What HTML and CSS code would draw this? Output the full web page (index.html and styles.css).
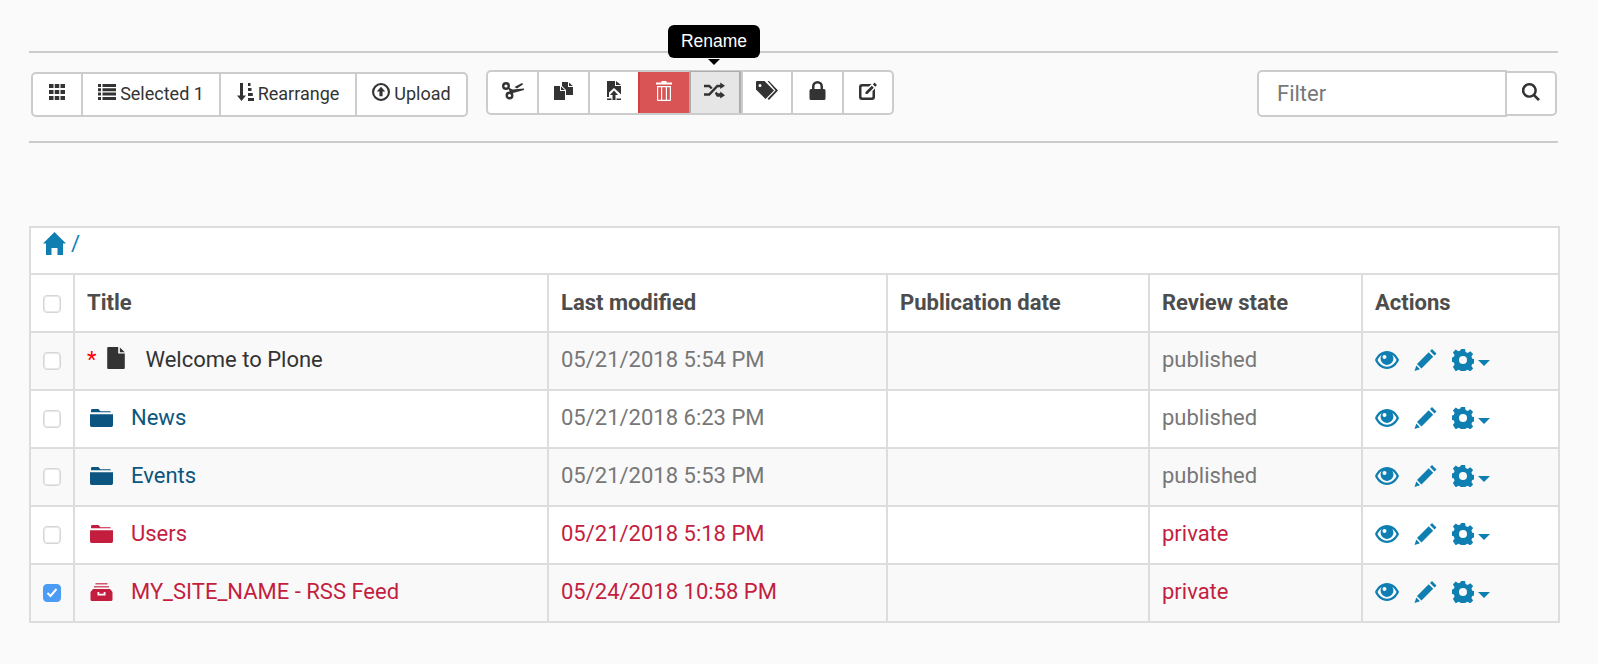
FILE: index.html
```html
<!DOCTYPE html>
<html lang="en">
<head>
    <meta charset="UTF-8">
    <meta name="viewport" content="width=device-width, initial-scale=1.0">
    <title>Folder contents</title>
    <link rel="stylesheet" href="styles.css">
</head>
<body>
    <svg class="defs" width="0" height="0">
        <symbol id="i-file" viewBox="0 0 16 20"><path d="M1 0h9v6h6v13a1 1 0 0 1-1 1H1a1 1 0 0 1-1-1V1a1 1 0 0 1 1-1zM11.500 0.500L16 4.800h-4.500z"/></symbol>
        <symbol id="i-folder" viewBox="0 0 22 17"><path d="M2 0h6l2 2h9a1 1 0 0 1 1 1H1V1a1 1 0 0 1 1-1zM0 5h22v10.500a1.500 1.500 0 0 1-1.500 1.500h-19A1.500 1.500 0 0 1 0 15.500z"/></symbol>
        <symbol id="i-box" viewBox="0 0 22 18"><path opacity=".75" d="M5 0h12v1.500H5zM3.500 3h15v1.500h-15z"/><path d="M2.500 6h17L22 9v7.500a1.500 1.500 0 0 1-1.500 1.500h-19A1.500 1.500 0 0 1 0 16.500V9zM7 9v3.500h8V9h-1.800v1.800H8.800V9z"/></symbol>
        <symbol id="i-eye" viewBox="0 0 24 18"><path fill-rule="evenodd" d="M12 0c5.500 0 9.800 3.800 12 9-2.200 5.200-6.500 9-12 9S2.200 14.200 0 9C2.200 3.800 6.500 0 12 0zM2.500 9c1.900 3.900 5.300 6.700 9.500 6.700s7.600-2.800 9.500-6.700c-1-2-2.400-3.700-4.200-4.900.7 1 1.100 2.200 1.100 3.500 0 3.500-2.900 6.300-6.400 6.300S5.600 11.100 5.600 7.600c0-1.300.4-2.500 1.100-3.500C4.900 5.300 3.500 7 2.500 9zM9.500 4a2 2 0 1 0 0 4 2 2 0 0 0 0-4z"/></symbol>
        <symbol id="i-pencil" viewBox="0 0 22 22"><path d="M17.500 0l4.500 4.500-2 2L15.500 2zM14.200 3.300l4.500 4.500L7 19.500 2.500 15zM1.800 16.500l3.700 3.700L0 22z"/></symbol>
        <symbol id="i-gear" viewBox="0 0 22 22"><path fill-rule="evenodd" d="M9 0h4l.6 3 2.100.9 2.600-1.700 2.800 2.800-1.700 2.600.9 2.100 3 .6v4l-3 .6-.9 2.100 1.700 2.600-2.800 2.800-2.600-1.700-2.100.9-.6 3H9l-.6-3-2.100-.9-2.600 1.700L.9 18l1.700-2.600-.9-2.100-3-.6v-4l3-.6.9-2.100L.9 3.400 3.700.6l2.600 1.700 2.100-.9zM11 7a4 4 0 1 0 0 8 4 4 0 0 0 0-8z"/></symbol>
    </svg>

    <div class="page">
        <div class="toolbar">
            <div class="btn-group low">
                <button class="btn wide-1"><svg class="ic" width="16" height="16" viewBox="0 0 16 16"><path d="M0 0h4.500v4H0zM5.750 0h4.500v4h-4.500zM11.500 0H16v4h-4.500zM0 6h4.500v4H0zM5.750 6h4.500v4h-4.500zM11.500 6H16v4h-4.500zM0 12h4.500v4H0zM5.750 12h4.500v4h-4.500zM11.500 12H16v4h-4.500z"/></svg></button>
                <button class="btn wide-2"><svg class="ic" width="18" height="16" viewBox="0 0 18 16"><path d="M0 0h3v3H0zM4.500 0H18v3H4.500zM0 4.300h3v3H0zM4.500 4.300H18v3H4.500zM0 8.600h3v3H0zM4.500 8.600H18v3H4.500zM0 13h3v3H0zM4.500 13H18v3H4.500z"/></svg><span>Selected 1</span></button>
                <button class="btn wide-3"><svg class="ic" width="17" height="18" viewBox="0 0 17 18"><path d="M3 0h3v12.500h3L4.500 18 0 12.500h3zM11 0h2.500v3H11zM11 5h3.500v3H11zM11 10h4.800v3H11zM11 15h6v3h-6z"/></svg><span>Rearrange</span></button>
                <button class="btn wide-4"><svg class="ic" width="18" height="18" viewBox="0 0 17 17"><path fill-rule="evenodd" d="M8.500 0a8.500 8.500 0 1 1 0 17 8.500 8.500 0 0 1 0-17zm0 2a6.500 6.500 0 1 0 0 13 6.500 6.500 0 0 0 0-13zm0 1.500l4 4.500H10v4.500H7V8H4.500z"/></svg><span>Upload</span></button>
            </div>

            <div class="btn-group icons">
                <button class="btn sq"><svg class="ic" width="22" height="18" viewBox="0 0 22 18"><circle cx="4" cy="4" r="2.800" fill="none" stroke="#333" stroke-width="2.400"/><circle cx="7.500" cy="13.500" r="2.800" fill="none" stroke="#333" stroke-width="2.400"/><path d="M6.500 5.500l4 2L22 6.500V8l-11 3-2.500 1-2-5.500zM12.500 5l7.500-4 1.200 1.200L15 6.500z"/></svg></button>
                <button class="btn sq"><svg class="ic" width="19" height="18" viewBox="0 0 19 18"><path d="M0 4h6v5h5v9H0zM7 4.500L10.800 8H7zM8 0h6v5h5v8h-7V8L8 4zM15 .5L18.800 4H15z"/></svg></button>
                <button class="btn sq"><svg class="ic" width="14" height="19" viewBox="0 0 14 19"><path d="M0 0h8v5h6v8.500L11.500 11 7 7 2 11.500V16H0zM9 0l5 4H9zM7 9.500l4 4.500H8.500v5h-3v-5H3zM0 17.500h4.500V19H0zM9.500 17.500H14V19H9.500z"/></svg></button>
                <button class="btn sq danger"><svg class="ic" width="16" height="20" viewBox="0 0 16 20"><path fill-rule="evenodd" d="M5.500 0h5v1.500h5.500v2H0v-2h5.500zM1 5h14v14a1 1 0 0 1-1 1H2a1 1 0 0 1-1-1zm1.200 1.200V18.800H5V6.200zm4 0V18.800h3.600V6.200zm4.800 0V18.800h2.800V6.200z"/></svg></button>
                <button class="btn sq active"><svg class="ic" width="21" height="17" viewBox="0 0 22 17"><path d="M17 0l5 3.500L17 7V5h-2.500L6 14H0v-2.500h5L13.500 2.500H17zM0 2.500h6l3 3-1.700 1.800L5 5H0zM13 9.700l1.500 1.800H17v-2l5 4-5 3.500v-2h-3.500L11.300 11.500z"/></svg></button>
                <button class="btn sq"><svg class="ic" width="22" height="19" viewBox="0 0 22 19"><path fill-rule="evenodd" d="M1 0h7.500L18 9.500 9.500 18 0 8.500V1a1 1 0 0 1 1-1zm3 3a1.500 1.500 0 1 0 0 3 1.500 1.500 0 0 0 0-3zM11.500 0h1.500L22 9.500 13 19l-1.500-1.200 8-8.300z"/></svg></button>
                <button class="btn sq"><svg class="ic" width="17" height="19" viewBox="0 0 16 19"><path fill-rule="evenodd" d="M8 0a5.500 5.500 0 0 1 5.500 5.500V8h1A1.500 1.500 0 0 1 16 9.500v8a1.500 1.500 0 0 1-1.500 1.500h-13A1.500 1.500 0 0 1 0 17.500v-8A1.500 1.500 0 0 1 1.500 8h1V5.500A5.500 5.500 0 0 1 8 0zm0 2.500a3 3 0 0 0-3 3V8h6V5.500a3 3 0 0 0-3-3z"/></svg></button>
                <button class="btn sq"><svg class="ic" width="18" height="18" viewBox="0 0 18 18"><path d="M3 2h9.500L10 4.500H3.500a1 1 0 0 0-1 1v9a1 1 0 0 0 1 1h9a1 1 0 0 0 1-1V9L16 6.500V15a3 3 0 0 1-3 3H3a3 3 0 0 1-3-3V5a3 3 0 0 1 3-3zM12.800 3.700L14.800 5.700 8.500 12H6.500v-2zM15.500 0.500L18 3l-1.800 1.800-2.300-2.300z"/></svg></button>
                <div class="tooltip">Rename</div>
            </div>

            <div class="filter">
                <input class="filter-input" type="text" placeholder="Filter">
                <button class="filter-btn"><svg class="ic" width="18" height="18" viewBox="0 0 17 17"><path fill-rule="evenodd" d="M7 0a7 7 0 0 1 5.700 11l4.300 4.300-1.900 1.700-4.200-4.300A7 7 0 1 1 7 0zm0 2.300a4.700 4.700 0 1 0 0 9.400 4.700 4.700 0 0 0 0-9.400z"/></svg></button>
            </div>
        </div>

        <table class="listing">
            <colgroup>
                <col class="col-check">
                <col class="col-title">
                <col class="col-mod">
                <col class="col-pub">
                <col class="col-state">
                <col class="col-act">
            </colgroup>
            <thead>
                <tr class="crumbs">
                    <th colspan="6"><a class="crumb" href="#"><svg width="23" height="23" viewBox="0 0 23 23"><path d="M11.500 0L23 11.500h-3V23h-5.500v-7h-6v7H3V11.500H0z"/></svg><span>/</span></a></th>
                </tr>
                <tr class="heads">
                    <th><span class="cb"></span></th>
                    <th>Title</th>
                    <th>Last modified</th>
                    <th>Publication date</th>
                    <th>Review state</th>
                    <th>Actions</th>
                </tr>
            </thead>
            <tbody>
                <tr>
                    <td><span class="cb"></span></td>
                    <td class="title dark"><span class="star">*</span><svg class="doc"><use href="#i-file"/></svg><span>Welcome to Plone</span></td>
                    <td>05/21/2018 5:54 PM</td>
                    <td></td>
                    <td>published</td>
                    <td class="acts"><svg class="a-eye"><use href="#i-eye"/></svg><svg class="a-pen"><use href="#i-pencil"/></svg><svg class="a-gear"><use href="#i-gear"/></svg><span class="caret"></span></td>
                </tr>
                <tr>
                    <td><span class="cb"></span></td>
                    <td class="title blue"><svg class="fold"><use href="#i-folder"/></svg>News</td>
                    <td>05/21/2018 6:23 PM</td>
                    <td></td>
                    <td>published</td>
                    <td class="acts"><svg class="a-eye"><use href="#i-eye"/></svg><svg class="a-pen"><use href="#i-pencil"/></svg><svg class="a-gear"><use href="#i-gear"/></svg><span class="caret"></span></td>
                </tr>
                <tr>
                    <td><span class="cb"></span></td>
                    <td class="title blue"><svg class="fold"><use href="#i-folder"/></svg>Events</td>
                    <td>05/21/2018 5:53 PM</td>
                    <td></td>
                    <td>published</td>
                    <td class="acts"><svg class="a-eye"><use href="#i-eye"/></svg><svg class="a-pen"><use href="#i-pencil"/></svg><svg class="a-gear"><use href="#i-gear"/></svg><span class="caret"></span></td>
                </tr>
                <tr class="private">
                    <td><span class="cb"></span></td>
                    <td class="title"><svg class="fold"><use href="#i-folder"/></svg>Users</td>
                    <td>05/21/2018 5:18 PM</td>
                    <td></td>
                    <td>private</td>
                    <td class="acts"><svg class="a-eye"><use href="#i-eye"/></svg><svg class="a-pen"><use href="#i-pencil"/></svg><svg class="a-gear"><use href="#i-gear"/></svg><span class="caret"></span></td>
                </tr>
                <tr class="private">
                    <td><span class="cb on"><svg width="12" height="10" viewBox="0 0 12 10"><path d="M1.500 5l3 3 6-7" fill="none" stroke="#fff" stroke-width="2"/></svg></span></td>
                    <td class="title"><svg class="fold"><use href="#i-box"/></svg>MY_SITE_NAME - RSS Feed</td>
                    <td>05/24/2018 10:58 PM</td>
                    <td></td>
                    <td>private</td>
                    <td class="acts"><svg class="a-eye"><use href="#i-eye"/></svg><svg class="a-pen"><use href="#i-pencil"/></svg><svg class="a-gear"><use href="#i-gear"/></svg><span class="caret"></span></td>
                </tr>
            </tbody>
        </table>
    </div>
</body>
</html>
```

FILE: styles.css
```css
html, body {
    margin: 0;
    padding: 0;
}
body {
    background-color: #fafafa;
    color: #333;
    font-family: Roboto, "Liberation Sans", sans-serif;
    font-size: 22px;
}
.defs {
    display: block;
    height: 0;
}
.page {
    width: 1529px;
    margin-left: 29px;
    padding-top: 51px;
}
.toolbar {
    display: flex;
    align-items: flex-start;
    height: 92px;
    padding-top: 17px;
    box-sizing: border-box;
    border-top: 2px solid #ccc;
    border-bottom: 2px solid #ccc;
}
.ic {
    fill: #333;
    flex: none;
}
.btn-group {
    display: flex;
    height: 45px;
    background-color: #fff;
    border: 2px solid #ccc;
    border-radius: 5px;
    box-sizing: border-box;
    position: relative;
}
.btn-group.low {
    margin: 2px 0 0 2px;
}
.btn-group.low .ic {
    margin-bottom: 4px;
}
.btn-group.low .btn {
    padding-bottom: 2px;
}
.btn-group.icons {
    margin-left: 18px;
}
.btn {
    display: flex;
    align-items: center;
    justify-content: center;
    gap: 4px;
    padding: 0;
    background: none;
    border: 0;
    border-left: 2px solid #ccc;
    color: #333;
    font-family: inherit;
    font-size: 18px;
}
.btn:first-child {
    border-left: 0;
}
.wide-1 { width: 48px; }
.wide-2 { width: 138px; }
.wide-3 { width: 136px; }
.wide-4 { width: 111px; }
.sq {
    width: 50.500px;
    padding-bottom: 4px;
}
.sq:first-child {
    width: 49px;
}
.danger {
    background-color: #d95454;
    border-left-color: #d43f3f;
}
.danger .ic {
    fill: #fff;
}
.sq.active {
    width: 52px;
    background-color: #e6e6e6;
    border-left-color: #adadad;
    border-right: 2px solid #adadad;
    border-top: 1px solid #adadad;
    margin-top: -1px;
}
.tooltip {
    position: absolute;
    left: 180px;
    top: -47px;
    width: 92px;
    height: 33px;
    background-color: #000;
    color: #fff;
    border-radius: 6px;
    font-size: 17.500px;
    line-height: 33px;
    text-align: center;
    font-family: "Liberation Sans", Arial, sans-serif;
}
.tooltip::after {
    content: "";
    position: absolute;
    left: 40px;
    top: 100%;
    margin-top: 1px;
    border: 6px solid transparent;
    border-top-color: #000;
    border-bottom: 0;
}
.filter {
    display: flex;
    align-items: center;
    margin-left: auto;
    margin-right: 1px;
}
.filter-input {
    width: 250px;
    height: 47px;
    box-sizing: border-box;
    border: 2px solid #ccc;
    border-radius: 5px 0 0 5px;
    padding: 0 18px;
    font-family: inherit;
    font-size: 22px;
    background-color: #fff;
}
.filter-input::placeholder {
    color: #777;
    opacity: 1;
}
.filter-btn {
    width: 50px;
    height: 45px;
    box-sizing: border-box;
    border: 2px solid #ccc;
    border-left: 0;
    border-radius: 0 5px 5px 0;
    background-color: #fff;
    padding: 0 0 3px;
    display: flex;
    align-items: center;
    justify-content: center;
}
.listing {
    width: 1529px;
    margin-top: 83px;
    border-collapse: collapse;
    table-layout: fixed;
    background-color: #fff;
}
.listing th, .listing td {
    border: 2px solid #ddd;
    padding: 0 12px 3px;
    text-align: left;
    color: #777;
    height: 53px;
    box-sizing: content-box;
    white-space: nowrap;
}
.listing th {
    color: #4d4d4d;
    font-weight: 700;
    font-size: 22px;
    padding-bottom: 2px;
    height: 54px;
}
.col-check { width: 44px; }
.col-title { width: 474px; }
.col-mod { width: 339px; }
.col-pub { width: 262px; }
.col-state { width: 213px; }
.col-act { width: 197px; }
.listing tbody tr:nth-child(odd) {
    background-color: #f9f9f9;
}
.listing .crumbs th {
    height: 43px;
    vertical-align: top;
    padding-top: 2px;
    padding-bottom: 0;
}
.crumb {
    display: inline-flex;
    align-items: center;
    gap: 5px;
    color: #0f7fb2;
    font-weight: 400;
    text-decoration: none;
    padding-top: 1px;
}
.crumb svg {
    fill: currentColor;
}
.cb {
    display: flex;
    align-items: center;
    justify-content: center;
    box-sizing: border-box;
    width: 18px;
    height: 18px;
    margin-top: 3px;
    background-color: #fff;
    border: 1px solid #d6d6d6;
    box-shadow: inset 0 0 0 1px #e8e8e8;
    border-radius: 4px;
}
.cb.on {
    background-color: #4a9cf5;
    border-color: #4a9cf5;
    box-shadow: none;
}
.listing td.title {
    color: #333;
}
.title svg {
    fill: currentColor;
    vertical-align: -2px;
}
.listing td.blue {
    color: #0b5580;
}
.listing .private td {
    color: #c41e3f;
}
.star {
    color: #f00;
    margin-right: 10px;
}
.doc {
    width: 20px;
    height: 22px;
    vertical-align: -3px;
    margin-right: 19px;
}
.fold {
    width: 23px;
    height: 18px;
    margin: 0 18px 0 3px;
}
.listing td.acts {
    padding-bottom: 6px;
    height: 50px;
}
.acts svg {
    fill: #0f7fb2;
    vertical-align: middle;
}
.a-eye { width: 24px; height: 18px; margin-right: 15px; }
.a-pen { width: 23px; height: 22px; margin-right: 15px; }
.a-gear { width: 22px; height: 22px; margin-right: 4px; }
.caret {
    display: inline-block;
    border: 6px solid transparent;
    border-top-color: #0f7fb2;
    border-bottom: 0;
    vertical-align: -1px;
}
```
